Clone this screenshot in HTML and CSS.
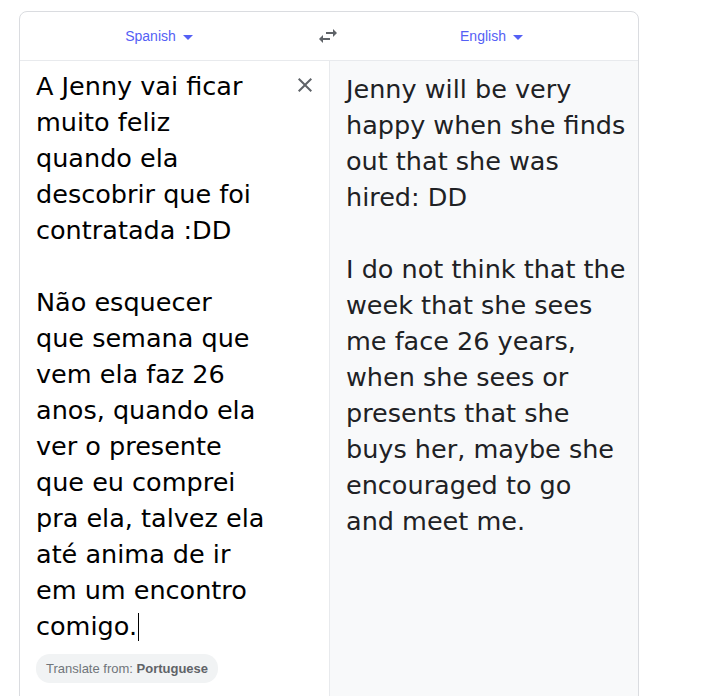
FILE: index.html
```html
<!DOCTYPE html>
<html>
<head>
<meta charset="utf-8">
<link rel="stylesheet" href="styles.css">
</head>
<body>
<div class="card">
  <div class="header">
    <div class="lang"><span>Spanish</span><span class="caret"></span></div>
    <div class="swap">
      <svg width="24" height="24" viewBox="0 0 24 24"><path fill="#5f6368" d="M6.99 11L3 15l3.99 4v-3H14v-2H6.99v-3zM21 9l-3.99-4v3H10v2h7.01v3L21 9z"/></svg>
    </div>
    <div class="lang"><span>English</span><span class="caret"></span></div>
  </div>
  <div class="panes">
    <div class="source">
      <div class="src-row">
        <div class="src-text">A Jenny vai ficar<br>muito feliz<br>quando ela<br>descobrir que foi<br>contratada :DD<br><br>Não esquecer<br>que semana que<br>vem ela faz 26<br>anos, quando ela<br>ver o presente<br>que eu comprei<br>pra ela, talvez ela<br>até anima de ir<br>em um encontro<br>comigo.<span class="cursor"></span></div>
        <div class="clear">
          <svg width="24" height="24" viewBox="0 0 24 24"><path fill="#5f6368" d="M19 6.41L17.59 5 12 10.59 6.41 5 5 6.41 10.59 12 5 17.59 6.41 19 12 13.41 17.59 19 19 17.59 13.41 12z"/></svg>
        </div>
      </div>
      <div class="chip">Translate from: <b>Portuguese</b></div>
    </div>
    <div class="target">
      <div class="tgt-text">Jenny will be very<br>happy when she finds<br>out that she was<br>hired: DD<br><br>I do not think that the<br>week that she sees<br>me face 26 years,<br>when she sees or<br>presents that she<br>buys her, maybe she<br>encouraged to go<br>and meet me.</div>
    </div>
  </div>
</div>
</body>
</html>
```

FILE: styles.css
```css
html, body { margin: 0; padding: 0; background: #fff; }
body { padding: 11px 0 0 19px; font-family: "Open Sans", Roboto, sans-serif; overflow: hidden; height: 696px; box-sizing: border-box; }
.card {
  width: 620px;
  box-sizing: border-box;
  border: 1px solid #dadce0;
  border-radius: 8px;
  height: 720px;
  display: flex;
  flex-direction: column;
  overflow: hidden;
}
.header {
  height: 49px;
  flex: none;
  display: grid;
  grid-template-columns: 278px 60px 1fr;
  padding-right: 13px;
  align-items: center;
  border-bottom: 1px solid #e8eaed;
  box-sizing: border-box;
}
.lang {
  display: flex;
  justify-content: center;
  align-items: center;
  gap: 7px;
  color: #5460f5;
  font-family: "Liberation Sans", Arial, sans-serif;
  font-size: 14px;
}
.caret {
  width: 0; height: 0;
  border-left: 5px solid transparent;
  border-right: 5px solid transparent;
  border-top: 5px solid #5460f5;
  margin-top: 2px;
}
.swap { display: flex; justify-content: center; align-items: center; }
.panes { flex: 1; display: grid; grid-template-columns: 310px 1fr; }
.source { border-right: 1px solid #e8eaed; display: flex; flex-direction: column; padding: 5px 0 0 16px; }
.src-row { display: flex; justify-content: space-between; }
.src-text {
  font-family: "DejaVu Sans", sans-serif;
  font-size: 25.5px;
  line-height: 36px;
  color: #000;
  white-space: nowrap;
  padding-top: 2px;
}
.cursor { display: inline-block; width: 1px; height: 28px; background: #000; vertical-align: -6px; margin-left: 1px; }
.clear { padding: 7px 12px 0 0; }
.chip {
  align-self: flex-start;
  margin-top: 10px;
  background: #f1f3f4;
  border-radius: 14px;
  padding: 7px 10px;
  font-family: "Liberation Sans", Arial, sans-serif;
  font-size: 13px;
  color: #70757a;
}
.chip b { color: #5f6368; font-weight: 700; }
.target { background: #f8f9fa; padding: 10px 0 0 16px; }
.tgt-text {
  font-family: "DejaVu Sans", sans-serif;
  font-size: 25.5px;
  line-height: 36px;
  color: #202124;
  white-space: nowrap;
}
```
